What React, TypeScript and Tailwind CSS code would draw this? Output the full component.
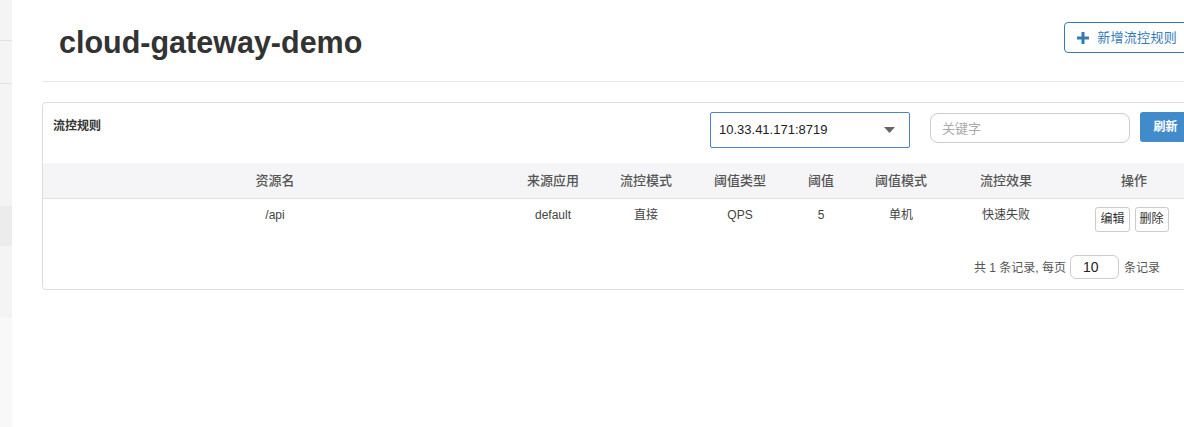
import React from "react";

const cols = [
  { title: "资源名", w: "w-[464px]" },
  { title: "来源应用", w: "w-[92px]" },
  { title: "流控模式", w: "w-[94px]" },
  { title: "阈值类型", w: "w-[94px]" },
  { title: "阈值", w: "w-[68px]" },
  { title: "阈值模式", w: "w-[92px]" },
  { title: "流控效果", w: "w-[118px]" },
  { title: "操作", w: "w-[138px]" },
];

const row = ["/api", "default", "直接", "QPS", "5", "单机", "快速失败"];

const cjk = "font-['Liberation_Sans','Noto_Sans_CJK_SC',sans-serif]";

export default function App() {
  return (
    <div className={`flex w-[1184px] h-[427px] overflow-hidden bg-white text-[#333] ${cjk}`}>
      {/* sidebar strip */}
      <div className="w-[12px] shrink-0 flex flex-col bg-[#f4f4f4]">
        <div className="h-[41px] border-b border-[#e2e2e2]" />
        <div className="h-[43px] border-b border-[#e2e2e2]" />
        <div className="h-[122px]" />
        <div className="h-[40px] bg-[#ececec]" />
        <div className="h-[71px]" />
        <div className="flex-1 bg-[#f8f8f8]" />
      </div>

      <div className="pl-[30px] shrink-0">
        <div className="w-[1160px]">
          {/* header */}
          <div className="h-[82px] flex items-start border-b border-[#e5e5e5]">
            <h1 className="pl-[17px] pt-[22px] text-[30.5px] leading-[40px] font-bold text-[#333]">
              cloud-gateway-demo
            </h1>
            <button className="ml-auto mr-[12px] mt-[22px] h-[31px] pl-[12px] pr-[12px] flex items-center gap-[8px] border border-[#337ab7] rounded-[4px] text-[#337ab7] text-[13px]">
              <svg width="12" height="12" viewBox="0 0 12 12" fill="#337ab7">
                <rect x="4.5" y="0" width="3" height="12" />
                <rect x="0" y="4.5" width="12" height="3" />
              </svg>
              <span className="tracking-[0.3px]">新增流控规则</span>
            </button>
          </div>

          {/* panel */}
          <div className="mt-[20px] border border-[#dddddd] rounded-[4px]">
            <div className="h-[60px] flex items-start pr-[10px]">
              <div className="pl-[10px] pt-[14px] text-[12px] font-bold text-[#333]">流控规则</div>
              <div className="ml-auto flex items-start mt-[9px]">
                <div className="w-[200px] h-[36px] border border-[#4a84c4] rounded-[2px] flex items-center pl-[8px] pr-[14px] text-[13px] text-[#222]">
                  <span>10.33.41.171:8719</span>
                  <svg className="ml-auto" width="11" height="6" viewBox="0 0 11 6" fill="#666">
                    <path d="M0 0h11L5.5 6z" />
                  </svg>
                </div>
                <input
                  className="ml-[20px] mt-[1px] w-[200px] h-[30px] border border-[#cccccc] rounded-[8px] px-[11px] text-[13px] outline-none placeholder:text-[#aaa]"
                  placeholder="关键字"
                />
                <button className="ml-[10px] w-[51px] h-[30px] bg-[#428bca] rounded-[3px] text-white text-[12px] font-bold">
                  刷新
                </button>
              </div>
            </div>

            <table className="w-full border-collapse table-fixed">
              <thead>
                <tr className="bg-[#f5f5f7] h-[35px] border-b border-[#e0e0e0]">
                  {cols.map((c) => (
                    <th key={c.title} className={`${c.w} text-[13px] font-medium text-[#555] text-center`}>
                      {c.title}
                    </th>
                  ))}
                </tr>
              </thead>
              <tbody>
                <tr className="h-[43px] align-top">
                  {row.map((v, i) => (
                    <td key={i} className="pt-[8px] text-[12px] text-[#444] text-center leading-[16px]">
                      {v}
                    </td>
                  ))}
                  <td className="pt-[8px] text-center">
                    <div className="flex justify-center gap-[5px] pr-[4px]">
                      <button className="h-[25px] px-[4px] border border-[#cccccc] rounded-[3px] text-[12px] text-[#333] bg-white">
                        编辑
                      </button>
                      <button className="h-[25px] px-[4px] border border-[#cccccc] rounded-[3px] text-[12px] text-[#333] bg-white">
                        删除
                      </button>
                    </div>
                  </td>
                </tr>
              </tbody>
            </table>

            <div className="h-[48px] flex items-start justify-end pr-[41px] pt-[14px] text-[12px] text-[#555]">
              <span className="mt-[4px]">共 1 条记录, 每页</span>
              <div className="ml-[4px] w-[49px] h-[24px] border border-[#cccccc] rounded-[6px] flex items-center pl-[12px] text-[14px] text-[#222]">
                10
              </div>
              <span className="ml-[5px] mt-[4px]">条记录</span>
            </div>
          </div>
        </div>
      </div>
    </div>
  );
}
